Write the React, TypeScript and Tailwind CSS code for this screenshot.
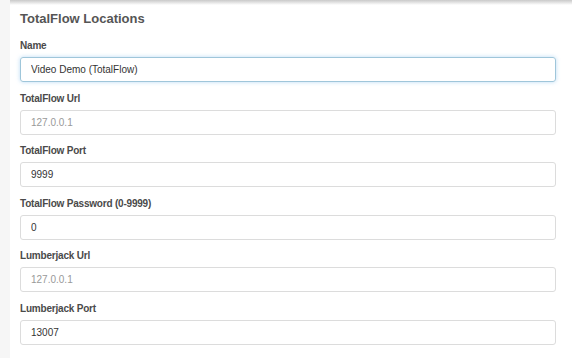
import React from 'react';

const fields = [
  { label: 'Name', value: 'Video Demo (TotalFlow)', focused: true },
  { label: 'TotalFlow Url', placeholder: '127.0.0.1' },
  { label: 'TotalFlow Port', value: '9999' },
  { label: 'TotalFlow Password (0-9999)', value: '0' },
  { label: 'Lumberjack Url', placeholder: '127.0.0.1' },
  { label: 'Lumberjack Port', value: '13007' },
];

const App: React.FC = () => {
  return (
    <div className="h-[358px] w-[572px] overflow-hidden bg-[#f6f6f6] flex font-['Liberation_Sans',Arial,sans-serif]">
      <div className="ml-[10px] flex-1 bg-white relative">
        <div className="absolute top-0 left-0 right-0 h-[5px] bg-gradient-to-b from-[#c9c9c9] to-white" />
        <div className="pl-[10px] pr-[16px] pt-[10px]">
          <h2 className="text-[13px] leading-[18px] font-bold text-[#555]">TotalFlow Locations</h2>
          <div className="mt-[11px]">
            {fields.map((f) => (
              <div key={f.label} className="mb-[9.5px]">
                <label className="block text-[10px] leading-[14px] font-bold tracking-[-0.2px] text-[#4a4a4a] mb-[3px]">{f.label}</label>
                <input
                  readOnly
                  defaultValue={f.value}
                  placeholder={f.placeholder}
                  className={`w-full h-[25px] rounded-[3px] border px-[10px] text-[10px] text-[#333] placeholder:text-[#999] outline-none ${
                    f.focused
                      ? 'border-[#9fc6da] shadow-[0_0_4px_rgba(102,175,233,0.45)]'
                      : 'border-[#dcdcdc]'
                  }`}
                />
              </div>
            ))}
          </div>
        </div>
      </div>
    </div>
  );
};

export default App;
